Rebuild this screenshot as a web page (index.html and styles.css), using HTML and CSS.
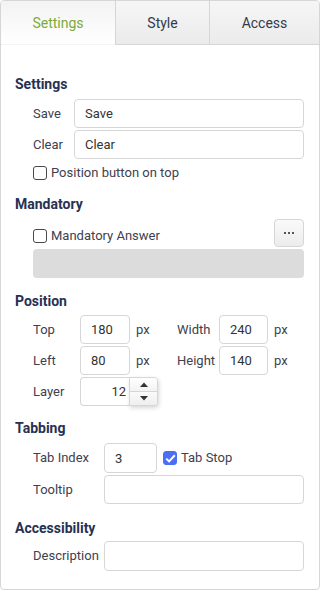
FILE: index.html
```html
<!DOCTYPE html>
<html>
<head>
<meta charset="utf-8">
<link rel="stylesheet" href="styles.css">
</head>
<body>
<div class="panel">
  <div class="tabs">
    <div class="tab active tab-settings">Settings</div>
    <div class="tab tab-style">Style</div>
    <div class="tab tab-access">Access</div>
  </div>
  <div class="content">
    <section class="section first">
      <h3 class="heading">Settings</h3>
      <div class="grid-settings">
        <label class="lbl">Save</label>
        <input class="field" type="text" value="Save">
        <label class="lbl">Clear</label>
        <input class="field" type="text" value="Clear">
      </div>
      <div class="check-row">
        <span class="cb"></span><span class="cb-text">Position button on top</span>
      </div>
    </section>

    <section class="section sec-mandatory">
      <h3 class="heading">Mandatory</h3>
      <div class="mand-row">
        <div class="mand-check"><span class="cb"></span><span class="cb-text">Mandatory Answer</span></div>
        <button class="dots-btn"><span class="dot"></span><span class="dot"></span><span class="dot"></span></button>
      </div>
      <div class="grey-box"></div>
    </section>

    <section class="section sec-position">
      <h3 class="heading">Position</h3>
      <div class="grid-pos">
        <span class="lbl">Top</span>
        <input class="field num" type="text" value="180">
        <span class="unit">px</span>
        <span class="lbl">Width</span>
        <input class="field num" type="text" value="240">
        <span class="unit">px</span>

        <span class="lbl">Left</span>
        <input class="field num" type="text" value="80">
        <span class="unit">px</span>
        <span class="lbl">Height</span>
        <input class="field num" type="text" value="140">
        <span class="unit">px</span>

        <span class="lbl">Layer</span>
        <div class="spin">
          <input class="spin-input" type="text" value="12">
          <div class="spin-btns">
            <span class="spin-up"><svg width="8" height="5" viewBox="0 0 8 5"><path d="M0 5 L4 0.5 L8 5 Z" fill="#333"/></svg></span>
            <span class="spin-down"><svg width="8" height="5" viewBox="0 0 8 5"><path d="M0 0 L8 0 L4 4.5 Z" fill="#333"/></svg></span>
          </div>
        </div>
      </div>
    </section>

    <section class="section sec-tabbing">
      <h3 class="heading">Tabbing</h3>
      <div class="grid-tab">
        <span class="lbl">Tab Index</span>
        <div class="tabidx-row">
          <input class="field idx" type="text" value="3">
          <span class="cb checked"><svg width="11" height="9" viewBox="0 0 11 9"><path d="M1.2 4.6 L4.1 7.4 L9.8 1.2" fill="none" stroke="#fff" stroke-width="2"/></svg></span>
          <span class="cb-text">Tab Stop</span>
        </div>
        <span class="lbl">Tooltip</span>
        <input class="field" type="text" value="">
      </div>
    </section>

    <section class="section sec-access">
      <h3 class="heading">Accessibility</h3>
      <div class="grid-tab">
        <span class="lbl">Description</span>
        <input class="field tall" type="text" value="">
      </div>
    </section>
  </div>
</div>
</body>
</html>
```

FILE: styles.css
```css
* { box-sizing: border-box; }
html, body { margin: 0; padding: 0; background: #fff; }
body { font-family: Roboto, "Noto Sans", sans-serif; font-size: 13px; color: #3d4150; }

.panel {
  width: 320px;
  height: 590px;
  border: 1px solid #d6d6d6;
  border-radius: 4px;
  overflow: hidden;
}

.tabs { display: flex; height: 44px; }
.tab {
  display: flex; align-items: center; justify-content: center;
  font-size: 14px; color: #333a4d;
  background: linear-gradient(#f6f6f6, #ebebeb);
  border-bottom: 1px solid #d6d6d6;
  padding-top: 1px;
}
.tab-settings { width: 114px; }
.tab-style { width: 94px; border-left: 1px solid #d6d6d6; }
.tab-access { flex: 1; border-left: 1px solid #d6d6d6; }
.tab.active {
  color: #7bab3a;
  background: linear-gradient(#f3f3f3, #ffffff);
  border-bottom-color: transparent;
}

.content { padding: 29px 15px 0 14px; }

.section { margin-top: 12px; }
.section.first { margin-top: 0; }
.sec-mandatory { margin-top: 11px; }
.sec-position { margin-top: 13px; }
.sec-tabbing { margin-top: 12px; }
.sec-access { margin-top: 14px; }

.heading {
  margin: 0 0 5px 0;
  font-size: 14px; line-height: 20px; font-weight: 700;
  color: #283152;
}
.sec-position .heading { margin-bottom: 4px; }
.sec-access .heading { margin-bottom: 3px; }

.lbl { color: #3d4150; line-height: 20px; }

.field {
  font-family: Roboto, "Noto Sans", sans-serif;
  font-size: 13px; color: #333;
  height: 29px;
  border: 1px solid #d6d6d6;
  border-radius: 4px;
  padding: 0 10px;
  background: #fff;
  outline: none;
  width: 100%;
  min-width: 0;
}

.grid-settings {
  display: grid;
  grid-template-columns: 41px 1fr;
  row-gap: 2px;
  align-items: center;
  padding-left: 18px;
}

.check-row {
  display: flex; align-items: center;
  padding-left: 18px;
  margin-top: 4px;
  height: 20px;
}
.cb {
  width: 14px; height: 14px;
  border: 1px solid #4a4a4a;
  border-radius: 3px;
  background: #fff;
  flex: none;
  display: inline-flex; align-items: center; justify-content: center;
}
.cb.checked { background: #4a6ef5; border-color: #4a6ef5; }
.cb-text { margin-left: 4px; color: #3d4150; line-height: 20px; font-size: 13px; }

.mand-row {
  display: flex; align-items: flex-end; justify-content: space-between;
  padding-left: 18px;
}
.mand-check { display: flex; align-items: center; height: 20px; margin-bottom: 1px; }
.dots-btn {
  width: 30px; height: 28px;
  border: 1px solid #d6d6d6; border-radius: 4px;
  background: linear-gradient(#fafafa, #ececec);
  display: flex; align-items: center; justify-content: center; gap: 2px;
  padding: 0;
}
.dot { width: 2px; height: 2px; background: #555; }

.grey-box {
  margin: 2px 0 0 18px;
  height: 29px;
  background: #dcdcdc;
  border-radius: 4px;
}

.grid-pos {
  display: grid;
  grid-template-columns: 47px 50px 47px 42px 49px auto;
  row-gap: 2px;
  align-items: center;
  padding-left: 18px;
}
.unit { padding-left: 6px; color: #3d4150; }
.num { padding: 0 10px; }

.spin {
  grid-column: 2 / span 2;
  display: flex; width: 78px; height: 29px;
}
.spin-input {
  font-family: Roboto, "Noto Sans", sans-serif;
  font-size: 13px; color: #333;
  width: 49px; height: 29px;
  border: 1px solid #d6d6d6; border-right: none;
  border-radius: 4px 0 0 4px;
  text-align: right; padding: 0 3px 0 4px;
  outline: none; background: #fff;
}
.spin-btns {
  width: 29px; height: 29px;
  display: flex; flex-direction: column;
  border: 1px solid #d6d6d6;
  border-radius: 0 4px 4px 0;
  box-shadow: 1px 2px 4px rgba(0,0,0,0.16);
  background: #f7f7f7;
  overflow: hidden;
}
.spin-up, .spin-down {
  flex: 1; display: flex; align-items: center; justify-content: center;
}
.spin-up { border-bottom: 1px solid #d6d6d6; background: linear-gradient(#ffffff, #f3f3f3); }
.spin-down { background: linear-gradient(#fafafa, #efefef); }

.grid-tab {
  display: grid;
  grid-template-columns: 71px 1fr;
  row-gap: 2px;
  align-items: center;
  padding-left: 18px;
}
.tabidx-row { display: flex; align-items: center; }
.idx { width: 53px; height: 30px; }
.tabidx-row .cb { margin-left: 6px; }
.tall { height: 30px; }
```
